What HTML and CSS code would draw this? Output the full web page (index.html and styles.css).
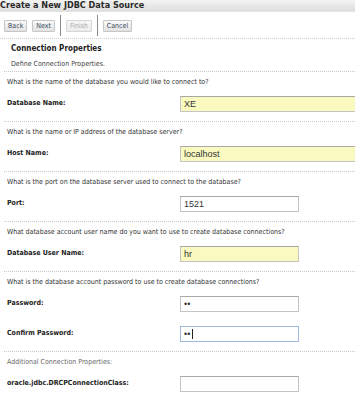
FILE: index.html
```html
<!DOCTYPE html>
<html lang="en">
<head>
  <meta charset="UTF-8">
  <title>Create a New JDBC Data Source</title>
  <link rel="stylesheet" href="styles.css">
</head>
<body>
  <div class="title-bar">Create a New JDBC Data Source</div>

  <div class="toolbar">
    <button class="btn">Back</button>
    <button class="btn">Next</button>
    <span class="sep"></span>
    <button class="btn" disabled>Finish</button>
    <span class="sep"></span>
    <button class="btn">Cancel</button>
  </div>

  <div class="page-head">
    <h2>Connection Properties</h2>
    <p class="intro">Define Connection Properties.</p>
  </div>

  <div class="section">
    <p class="question">What is the name of the database you would like to connect to?</p>
    <div class="field">
      <label>Database Name:</label>
      <input type="text" class="input wide required" value="XE">
    </div>
  </div>

  <div class="section">
    <p class="question">What is the name or IP address of the database server?</p>
    <div class="field">
      <label>Host Name:</label>
      <input type="text" class="input wide required" value="localhost">
    </div>
  </div>

  <div class="section">
    <p class="question">What is the port on the database server used to connect to the database?</p>
    <div class="field">
      <label>Port:</label>
      <input type="text" class="input" value="1521">
    </div>
  </div>

  <div class="section">
    <p class="question">What database account user name do you want to use to create database connections?</p>
    <div class="field">
      <label>Database User Name:</label>
      <input type="text" class="input required" value="hr">
    </div>
  </div>

  <div class="section">
    <p class="question">What is the database account password to use to create database connections?</p>
    <div class="field">
      <label>Password:</label>
      <input type="password" class="input" value="hr">
    </div>
    <div class="field">
      <label>Confirm Password:</label>
      <div class="input-wrap">
        <input type="password" class="input focused" value="hr">
        <span class="caret"></span>
      </div>
    </div>
  </div>

  <div class="section">
    <p class="question muted">Additional Connection Properties:</p>
    <div class="field">
      <label>oracle.jdbc.DRCPConnectionClass:</label>
      <input type="text" class="input" value="">
    </div>
  </div>
  <div class="section end"></div>
</body>
</html>
```

FILE: styles.css
```css
body {
  margin: 0;
  padding: 0;
  background: #fff;
  font-family: "DejaVu Sans Condensed", "DejaVu Sans", sans-serif;
  font-size: 7px;
  color: #333;
  overflow: hidden;
}

.title-bar {
  height: 11px;
  background: linear-gradient(#f4f4f4, #dedede);
  border-bottom: 1px solid #e4e4e4;
  font-weight: bold;
  font-size: 9px;
  line-height: 10px;
  color: #2a2a2a;
  overflow: hidden;
}

.toolbar {
  display: flex;
  align-items: center;
  gap: 5px;
  height: 25px;
  padding: 1px 4px 0;
  border-bottom: 1px dotted #cfcfcf;
}

.btn {
  font-family: inherit;
  font-size: 7px;
  height: 12px;
  padding: 0 3px;
  line-height: 10px;
  color: #3a4a60;
  background: linear-gradient(#fafafa, #e2e2e2);
  border: 1px solid #c6c6c6;
  border-radius: 1px;
}

.btn:disabled {
  color: #aaa;
  background: linear-gradient(#f6f6f6, #ececec);
  border-color: #d6d6d6;
}

.sep {
  width: 1px;
  height: 21px;
  background: #8c8c8c;
}

.page-head {
  padding: 4px 0 0 11px;
  height: 28px;
}

h2 {
  margin: 0;
  font-size: 8px;
  font-weight: bold;
  color: #222;
  line-height: 12px;
}

.intro {
  margin: 4px 0 0;
  line-height: 10px;
  color: #444;
}

.section {
  margin-left: 4px;
  border-top: 1px dotted #c8c8c8;
  padding: 5px 0 9px 3px;
}

.section.end {
  padding: 0;
}

.question {
  margin: 0;
  line-height: 10px;
  color: #333;
}

.question.muted {
  color: #6a6a6a;
}

.field {
  display: flex;
  align-items: center;
  margin-top: 9px;
  overflow: hidden;
}

.field + .field {
  margin-top: 14px;
}

label {
  flex-shrink: 0;
  width: 173px;
  font-weight: bold;
  color: #222;
  padding-bottom: 2px;
}

.input {
  box-sizing: border-box;
  width: 119px;
  height: 16px;
  padding: 0 3px;
  font-family: "Liberation Sans", sans-serif;
  font-size: 9px;
  color: #333;
  background: #fff;
  border: 1px solid #c4c4c4;
  border-top-color: #a8a8a8;
  outline: none;
}

.input.wide {
  width: 200px;
  flex-shrink: 0;
}

.input.required {
  background: #f9f9c0;
}

.input.focused {
  border-color: #9fb8e2;
}

.input-wrap {
  position: relative;
  display: flex;
}

.caret {
  position: absolute;
  left: 12px;
  top: 3px;
  width: 1px;
  height: 10px;
  background: #222;
}
```
